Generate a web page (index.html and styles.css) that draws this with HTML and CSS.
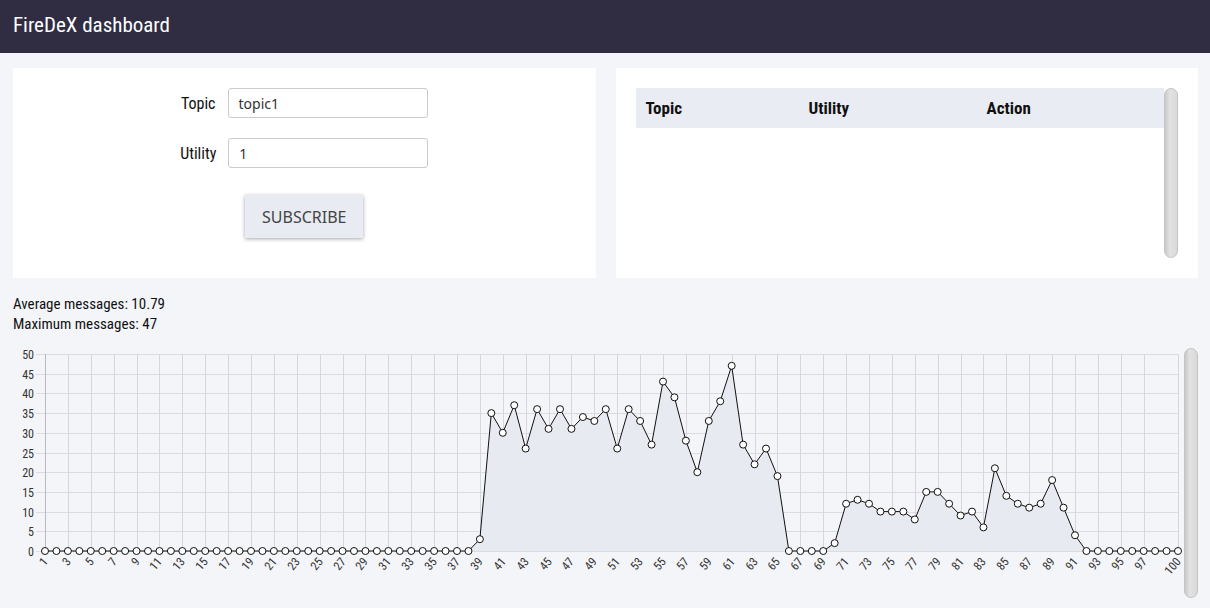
FILE: index.html
```html
<!DOCTYPE html>
<html>
<head>
<meta charset="utf-8">
<title>FireDeX dashboard</title>
<link rel="stylesheet" href="styles.css">
</head>
<body>
<header class="topbar">FireDeX dashboard</header>
<main class="main">
  <section class="cards">
    <div class="card form-card">
      <div class="form-row">
        <label class="form-label">Topic</label>
        <input class="form-input" type="text" value="topic1">
      </div>
      <div class="form-row">
        <label class="form-label">Utility</label>
        <input class="form-input" type="text" value="1">
      </div>
      <div class="btn-row">
        <button class="btn">SUBSCRIBE</button>
      </div>
    </div>
    <div class="card table-card">
      <div class="table-wrap">
        <div class="table-head">
          <div class="th th-topic">Topic</div>
          <div class="th th-utility">Utility</div>
          <div class="th th-action">Action</div>
        </div>
      </div>
      <div class="fake-scroll"></div>
    </div>
  </section>
  <section class="stats">
    <div>Average messages: 10.79</div>
    <div>Maximum messages: 47</div>
  </section>
  <section class="chart-row">
    <svg id="chart" class="chart" width="1168" height="255" viewBox="0 0 1168 255"></svg>
    <div class="fake-scroll chart-scroll"></div>
  </section>
</main>
<script src="script.js"></script>
</body>
</html>
```

FILE: styles.css
```css
* { box-sizing: border-box; }
html, body { margin: 0; padding: 0; }
body {
  background: #f4f5f9;
  font-family: "Liberation Sans Narrow", "Roboto Condensed", Roboto, sans-serif;
  color: #111;
  width: 1210px;
  height: 608px;
  overflow: hidden;
}
.topbar {
  height: 53px;
  background: #302d43;
  color: #fff;
  font-size: 21px;
  padding: 13px 13px 0;
}
.main {
  padding: 15px 12px 0 13px;
}
.cards {
  display: grid;
  grid-template-columns: minmax(0, 1fr) minmax(0, 1fr);
  gap: 20px;
}
.card {
  background: #fff;
  height: 210px;
}
.form-card {
  display: flex;
  flex-direction: column;
  align-items: center;
  padding-top: 20px;
}
.form-row {
  display: flex;
  align-items: center;
  gap: 12px;
  height: 30px;
  margin-bottom: 20px;
  font-size: 16px;
}
.form-input {
  width: 200px;
  height: 30px;
  border: 1px solid #ccc;
  border-radius: 3px;
  padding: 0 10px;
  font-family: "Noto Sans", sans-serif;
  font-size: 14px;
  color: #333;
}
.btn-row { margin-top: 7px; }
.btn {
  display: block;
  width: 118px;
  height: 43px;
  border: none;
  background: #e8ebf2;
  color: #444;
  font-family: "Noto Sans", sans-serif;
  font-size: 16px;
  box-shadow: 0 1px 4px rgba(0,0,0,0.35);
}
.table-card {
  display: flex;
  padding: 20px;
}
.table-wrap { flex: 1; }
.table-head {
  display: flex;
  height: 40px;
  align-items: center;
  background: #e9ecf3;
  font-weight: bold;
  font-size: 17px;
  padding-left: 10px;
}
.th-topic { width: 163px; }
.th-utility { width: 178px; }
.fake-scroll {
  width: 14px;
  border-radius: 7px;
  background: linear-gradient(to right, #c9c9c9, #e2e2e2 40%, #d9d9d9);
  border: 1px solid #c4c4c4;
}
.stats {
  padding-top: 16px;
  font-size: 15px;
  line-height: 20px;
}
.chart-row {
  display: flex;
  gap: 3px;
  margin-top: 11px;
}
.chart { display: block; overflow: visible; }
.chart-scroll { height: 250px; margin-top: 3px; }
.chart text {
  font-family: "Liberation Sans Narrow", "Roboto Condensed", Roboto, sans-serif;
  font-size: 12px;
  fill: #333;
}
```

FILE: script.js
```js
(function () {
  var data = [];
  for (var i = 0; i < 38; i++) data.push(0);
  data = data.concat([3,35,30,37,26,36,31,36,31,34,33,36,26,36,33,27,43,39,28,20,33,38,47,27,22,26,19,0,0,0,0,2,12,13,12,10,10,10,8,15,15,12,9,10,6,21,14,12,11,12,18,11,4,0,0,0,0,0,0,0,0,0]);
  var NS = 'http://www.w3.org/2000/svg';
  var svg = document.getElementById('chart');
  var x0 = 32, x1 = 1165, yTop = 9, yBot = 206;
  var step = (x1 - x0) / 99;
  function X(i) { return x0 + (i - 1) * step; }
  function Y(v) { return yBot - v * (yBot - yTop) / 50; }
  function el(name, attrs, text) {
    var e = document.createElementNS(NS, name);
    for (var k in attrs) e.setAttribute(k, attrs[k]);
    if (text !== undefined) e.textContent = text;
    svg.appendChild(e);
    return e;
  }
  for (var v = 0; v <= 50; v += 5) {
    var y = Math.round(Y(v)) + 0.5;
    el('line', { x1: x0 - 9, x2: x1, y1: y, y2: y, stroke: '#dcdce2', 'stroke-width': 1 });
    el('text', { x: x0 - 11, y: y + 4, 'text-anchor': 'end' }, String(v));
  }
  var ticks = [];
  for (var t = 1; t <= 97; t += 2) ticks.push(t);
  ticks.push(100);
  ticks.forEach(function (t) {
    var x = Math.round(X(t)) + 0.5;
    el('line', { x1: x, x2: x, y1: yTop, y2: yBot, stroke: t === 1 ? '#b8b8c0' : '#d6d6dc', 'stroke-width': 1 });
    el('text', { 'text-anchor': 'end', transform: 'translate(' + (x + 3) + ',' + (yBot + 11) + ') rotate(-50)' }, String(t));
  });
  var pts = data.map(function (v, i) { return X(i + 1).toFixed(2) + ',' + Y(v).toFixed(2); });
  el('polygon', { points: X(1) + ',' + yBot + ' ' + pts.join(' ') + ' ' + X(100) + ',' + yBot, fill: '#e8eaf2' });
  el('polyline', { points: pts.join(' '), fill: 'none', stroke: '#111', 'stroke-width': 1 });
  data.forEach(function (v, i) {
    el('circle', { cx: X(i + 1), cy: Y(v), r: 3.5, fill: '#fff', stroke: '#111', 'stroke-width': 1 });
  });
})();
```
